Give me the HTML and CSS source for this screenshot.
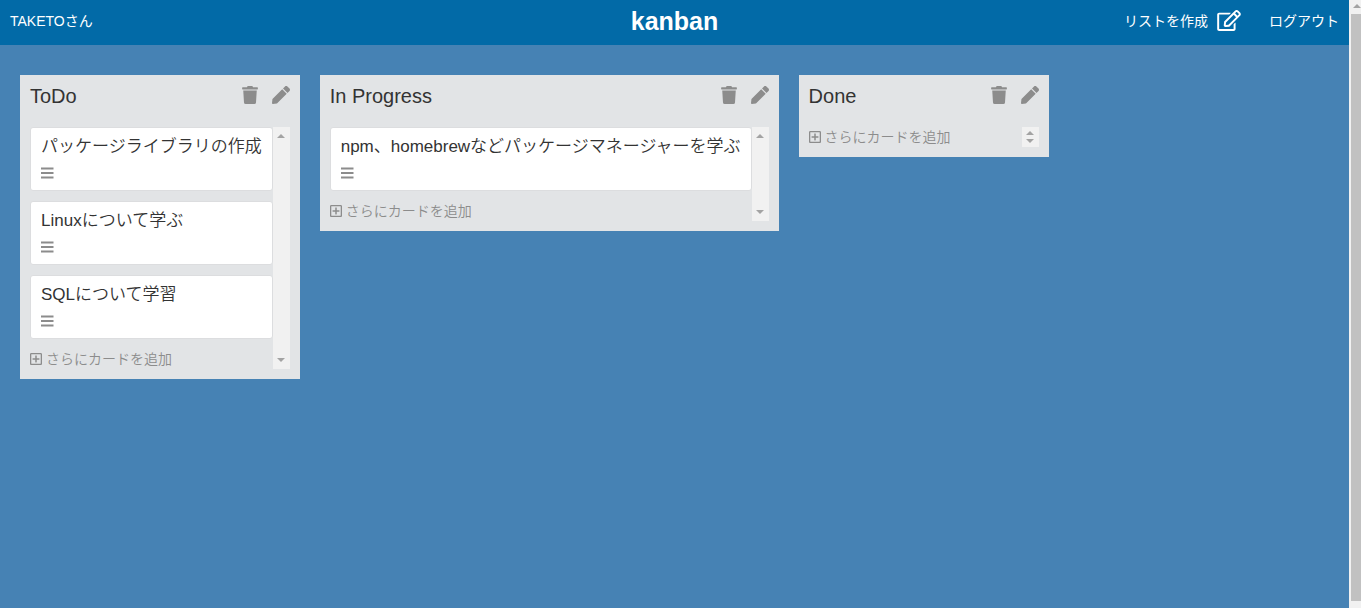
FILE: index.html
```html
<!DOCTYPE html>
<html lang="ja">
<head>
<meta charset="utf-8">
<meta name="viewport" content="width=device-width, initial-scale=1">
<title>kanban</title>
<link rel="stylesheet" href="styles.css">
</head>
<body>
<svg class="sprite" aria-hidden="true">
  <symbol id="trash" viewBox="0 0 448 512"><path d="M432 32H312l-9.4-18.7A24 24 0 0 0 281.1 0H166.8a23.72 23.72 0 0 0-21.4 13.3L136 32H16A16 16 0 0 0 0 48v32a16 16 0 0 0 16 16h416a16 16 0 0 0 16-16V48a16 16 0 0 0-16-16zM53.2 467a48 48 0 0 0 47.9 45h245.8a48 48 0 0 0 47.9-45L416 128H32z"/></symbol>
  <symbol id="pen" viewBox="0 0 512 512"><path d="M290.74 93.24l128.02 128.02-277.99 277.99-114.14 12.6C11.35 513.54-1.56 500.62.14 485.34l12.7-114.22 277.9-277.88zm207.2-19.06l-60.11-60.11c-18.75-18.75-49.16-18.75-67.91 0l-56.55 56.55 128.02 128.02 56.55-56.55c18.75-18.76 18.75-49.16 0-67.91z"/></symbol>
  <symbol id="bars" viewBox="0 0 13 14"><path d="M0 1.5h12.5v2H0zM0 6h12.5v2H0zM0 10.5h12.5v2H0z"/></symbol>
  <symbol id="plus" viewBox="0 0 448 512"><path d="M352 240v32c0 6.6-5.4 12-12 12h-88v88c0 6.6-5.4 12-12 12h-32c-6.6 0-12-5.4-12-12v-88h-88c-6.6 0-12-5.4-12-12v-32c0-6.6 5.4-12 12-12h88v-88c0-6.6 5.4-12 12-12h32c6.6 0 12 5.4 12 12v88h88c6.6 0 12 5.4 12 12zm96-160v352c0 26.5-21.5 48-48 48H48c-26.5 0-48-21.5-48-48V80c0-26.5 21.5-48 48-48h352c26.5 0 48 21.5 48 48zm-48 346V86c0-3.3-2.7-6-6-6H54c-3.3 0-6 2.7-6 6v340c0 3.3 2.7 6 6 6h340c3.3 0 6-2.7 6-6z"/></symbol>
  <symbol id="edit" viewBox="0 0 576 512"><path d="M402.3 344.9l32-32c5-5 13.7-1.5 13.7 5.7V464c0 26.5-21.5 48-48 48H48c-26.5 0-48-21.5-48-48V112c0-26.5 21.5-48 48-48h273.5c7.1 0 10.7 8.6 5.7 13.7l-32 32c-1.5 1.5-3.5 2.3-5.7 2.3H48v352h352V350.5c0-2.1.8-4.1 2.3-5.6zm156.6-201.8L296.3 405.7l-90.4 10c-26.2 2.9-48.5-19.2-45.6-45.6l10-90.4L432.9 17.1c22.9-22.9 59.9-22.9 82.7 0l43.2 43.2c22.9 22.9 22.9 60 .1 82.8zM460.1 174L402 115.9 216.2 301.8l-7.3 65.3 65.3-7.3L460.1 174zm64.8-79.7l-43.2-43.2c-4.1-4.1-10.8-4.1-14.8 0L436 82l58.1 58.1 30.9-30.9c4-4.2 4-10.8-.1-14.9z"/></symbol>
  <symbol id="up" viewBox="0 0 8 4"><path d="M0 4L4 0l4 4z"/></symbol>
  <symbol id="down" viewBox="0 0 8 4"><path d="M0 0h8L4 4z"/></symbol>
</svg>
<div class="window">
  <div class="page">
    <header class="header">
      <span class="user">TAKETOさん</span>
      <h1 class="logo"><a href="#">kanban</a></h1>
      <nav class="nav">
        <a class="nav-new" href="#">リストを作成 <svg class="icon-edit"><use href="#edit"/></svg></a>
        <a class="nav-logout" href="#">ログアウト</a>
      </nav>
    </header>
    <main class="board">
      <section class="list">
        <div class="list-header">
          <h2 class="list-title">ToDo</h2>
          <button class="icon-button" aria-label="リストを削除"><svg class="icon-trash"><use href="#trash"/></svg></button>
          <button class="icon-button" aria-label="リストを編集"><svg class="icon-pen"><use href="#pen"/></svg></button>
        </div>
        <div class="list-body">
          <div class="cards">
            <article class="card"><a class="card-title" href="#">パッケージライブラリの作成</a><svg class="icon-bars"><use href="#bars"/></svg></article>
            <article class="card"><a class="card-title" href="#">Linuxについて学ぶ</a><svg class="icon-bars"><use href="#bars"/></svg></article>
            <article class="card"><a class="card-title" href="#">SQLについて学習</a><svg class="icon-bars"><use href="#bars"/></svg></article>
            <a class="add-card" href="#"><svg class="icon-plus"><use href="#plus"/></svg>さらにカードを追加</a>
          </div>
          <div class="scroller" aria-hidden="true"><svg class="arrow"><use href="#up"/></svg><svg class="arrow"><use href="#down"/></svg></div>
        </div>
      </section>
      <section class="list">
        <div class="list-header">
          <h2 class="list-title">In Progress</h2>
          <button class="icon-button" aria-label="リストを削除"><svg class="icon-trash"><use href="#trash"/></svg></button>
          <button class="icon-button" aria-label="リストを編集"><svg class="icon-pen"><use href="#pen"/></svg></button>
        </div>
        <div class="list-body">
          <div class="cards">
            <article class="card"><a class="card-title" href="#">npm、homebrewなどパッケージマネージャーを学ぶ</a><svg class="icon-bars"><use href="#bars"/></svg></article>
            <a class="add-card" href="#"><svg class="icon-plus"><use href="#plus"/></svg>さらにカードを追加</a>
          </div>
          <div class="scroller" aria-hidden="true"><svg class="arrow"><use href="#up"/></svg><svg class="arrow"><use href="#down"/></svg></div>
        </div>
      </section>
      <section class="list">
        <div class="list-header">
          <h2 class="list-title">Done</h2>
          <button class="icon-button" aria-label="リストを削除"><svg class="icon-trash"><use href="#trash"/></svg></button>
          <button class="icon-button" aria-label="リストを編集"><svg class="icon-pen"><use href="#pen"/></svg></button>
        </div>
        <div class="list-body">
          <div class="cards">
            <a class="add-card" href="#"><svg class="icon-plus"><use href="#plus"/></svg>さらにカードを追加</a>
          </div>
          <div class="scroller scroller-short" aria-hidden="true"><svg class="arrow"><use href="#up"/></svg><svg class="arrow"><use href="#down"/></svg></div>
        </div>
      </section>
    </main>
  </div>
  <div class="page-scroller" aria-hidden="true">
    <svg class="arrow"><use href="#up"/></svg>
    <div class="page-thumb"></div>
  </div>
</div>
</body>
</html>
```

FILE: styles.css
```css
* {
  box-sizing: border-box;
}

body {
  margin: 0;
  color: #333;
  font-family: "Liberation Sans", "Noto Sans CJK JP", sans-serif;
  font-size: 14px;
  font-weight: 350;
  line-height: 20px;
}

a {
  color: inherit;
  text-decoration: none;
}

svg {
  display: block;
  flex: none;
  fill: currentColor;
}

.sprite {
  display: none;
}

.window {
  display: grid;
  grid-template-columns: minmax(0, 1fr) 12px;
  min-height: 100vh;
}

.page {
  background: #4682b4;
}

.header {
  display: grid;
  grid-template-columns: 1fr auto 1fr;
  align-items: center;
  min-height: 45px;
  padding: 0 10px 4px;
  color: #fff;
  background: #026aa7;
  font-weight: 400;
}

.logo {
  margin: 0;
  font-size: 25px;
  font-weight: 700;
  line-height: 30px;
}

.nav {
  display: flex;
  align-items: center;
  justify-content: flex-end;
  gap: 28px;
}

.nav-new {
  display: flex;
  align-items: center;
  gap: 9px;
}

.icon-edit {
  width: 24px;
  height: 21px;
}

.board {
  display: flex;
  align-items: flex-start;
  gap: 20px;
  padding: 30px 20px;
}

.list {
  flex: none;
  min-width: 250px;
  padding: 10px;
  background: #e2e4e6;
}

.list-header {
  display: flex;
  align-items: flex-start;
  gap: 14px;
  margin-bottom: 20px;
}

.list-title {
  flex: 1;
  margin: 0;
  font-size: 20px;
  font-weight: 400;
  line-height: 22px;
}

.icon-button {
  padding: 1px 0 0;
  border: 0;
  color: #8c8c8c;
  background: none;
  cursor: pointer;
}

.icon-trash {
  width: 16px;
  height: 18px;
}

.icon-pen {
  width: 18px;
  height: 18px;
}

.list-body {
  display: flex;
}

.cards {
  flex: 1;
}

.card {
  display: flex;
  flex-direction: column;
  gap: 9px;
  margin-bottom: 10px;
  padding: 9px 10px 10px;
  border: 1px solid #dcdddf;
  border-radius: 3px;
  background: #fff;
}

.card-title {
  font-size: 17px;
  white-space: nowrap;
}

.icon-bars {
  width: 13px;
  height: 14px;
  color: #8c8c8c;
}

.add-card {
  display: flex;
  align-items: center;
  gap: 4px;
  color: #8c8c8c;
}

.icon-plus {
  width: 12px;
  height: 14px;
}

.scroller {
  display: flex;
  flex-direction: column;
  align-items: center;
  justify-content: space-between;
  width: 17px;
  padding: 7px 0;
  color: #a3a3a3;
  background: #f1f1f1;
}

.scroller-short {
  padding: 4px 0;
}

.arrow {
  width: 8px;
  height: 4px;
}

.page-scroller {
  display: flex;
  flex-direction: column;
  gap: 6px;
  padding: 4px 0 7px 2px;
  overflow: hidden;
  color: #a3a3a3;
  background: #f1f1f1;
}

.page-scroller .arrow {
  margin-left: 2px;
}

.page-thumb {
  flex: 1;
  background: #c1c1c1;
}
```
